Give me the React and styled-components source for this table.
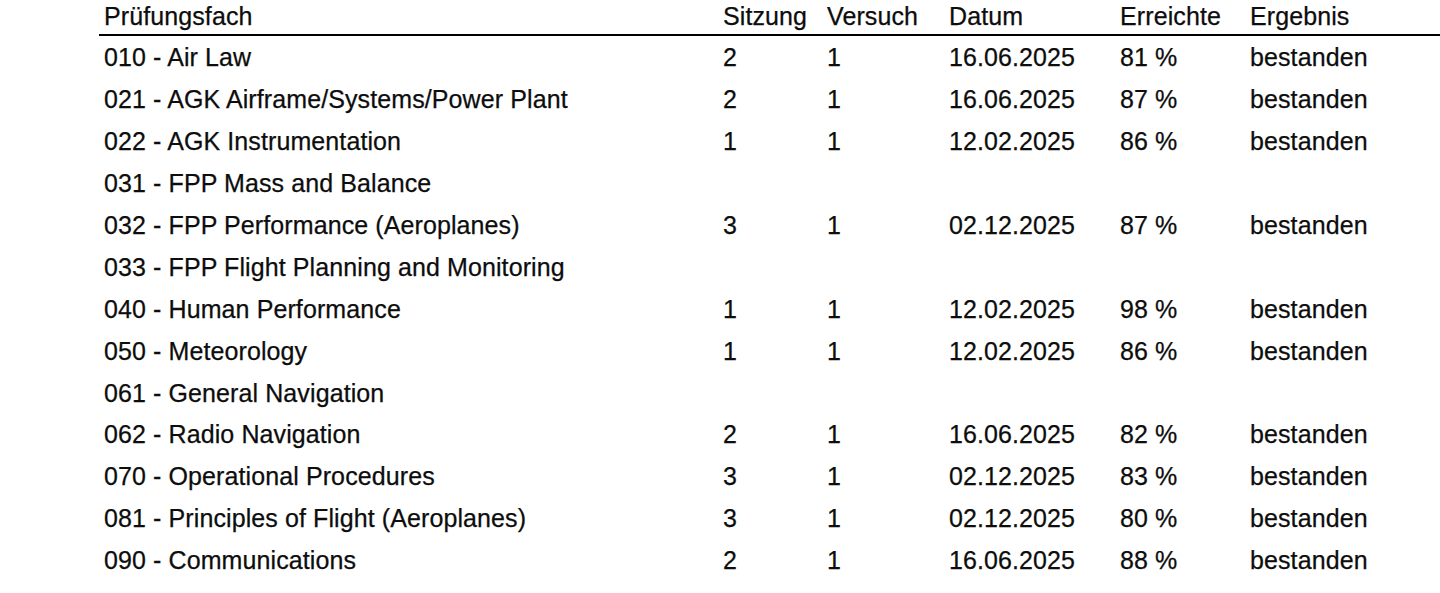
import React from 'react'
import styled, { createGlobalStyle } from 'styled-components'

const Global = createGlobalStyle`
  body {
    margin: 0;
    background: #fff;
    font-family: "Liberation Sans", Arial, sans-serif;
    color: #0d0d0d;
  }
`

const Table = styled.div`
  margin-left: 99px;
  display: flex;
  flex-direction: column;
`

const Row = styled.div`
  display: grid;
  grid-template-columns: 619px 104px 122px 171px 130px 1fr;
  height: ${p => (p.$head ? '34px' : '41.9px')};
  align-items: center;
  border-bottom: ${p => (p.$head ? '2px solid #000' : 'none')};
`

const Cell = styled.div`
  padding-left: 5px;
  font-size: 25px;
  letter-spacing: 0.1px;
  -webkit-text-stroke: 0.25px #0d0d0d;
  white-space: nowrap;
  line-height: 1;
  padding-bottom: ${p => (p.$head ? '2px' : '0')};
  padding-top: ${p => (p.$head ? '0' : '2px')};
`

const rows = [
  ['010 - Air Law', '2', '1', '16.06.2025', '81 %', 'bestanden'],
  ['021 - AGK Airframe/Systems/Power Plant', '2', '1', '16.06.2025', '87 %', 'bestanden'],
  ['022 - AGK Instrumentation', '1', '1', '12.02.2025', '86 %', 'bestanden'],
  ['031 - FPP Mass and Balance'],
  ['032 - FPP Performance (Aeroplanes)', '3', '1', '02.12.2025', '87 %', 'bestanden'],
  ['033 - FPP Flight Planning and Monitoring'],
  ['040 - Human Performance', '1', '1', '12.02.2025', '98 %', 'bestanden'],
  ['050 - Meteorology', '1', '1', '12.02.2025', '86 %', 'bestanden'],
  ['061 - General Navigation'],
  ['062 - Radio Navigation', '2', '1', '16.06.2025', '82 %', 'bestanden'],
  ['070 - Operational Procedures', '3', '1', '02.12.2025', '83 %', 'bestanden'],
  ['081 - Principles of Flight (Aeroplanes)', '3', '1', '02.12.2025', '80 %', 'bestanden'],
  ['090 - Communications', '2', '1', '16.06.2025', '88 %', 'bestanden'],
]

const head = ['Prüfungsfach', 'Sitzung', 'Versuch', 'Datum', 'Erreichte', 'Ergebnis']

export default function App() {
  return (
    <>
      <Global />
      <Table>
        <Row $head>
          {head.map(h => (
            <Cell $head key={h}>{h}</Cell>
          ))}
        </Row>
        {rows.map(r => (
          <Row key={r[0]}>
            {[0, 1, 2, 3, 4, 5].map(i => (
              <Cell key={i}>{r[i] || ''}</Cell>
            ))}
          </Row>
        ))}
      </Table>
    </>
  )
}
